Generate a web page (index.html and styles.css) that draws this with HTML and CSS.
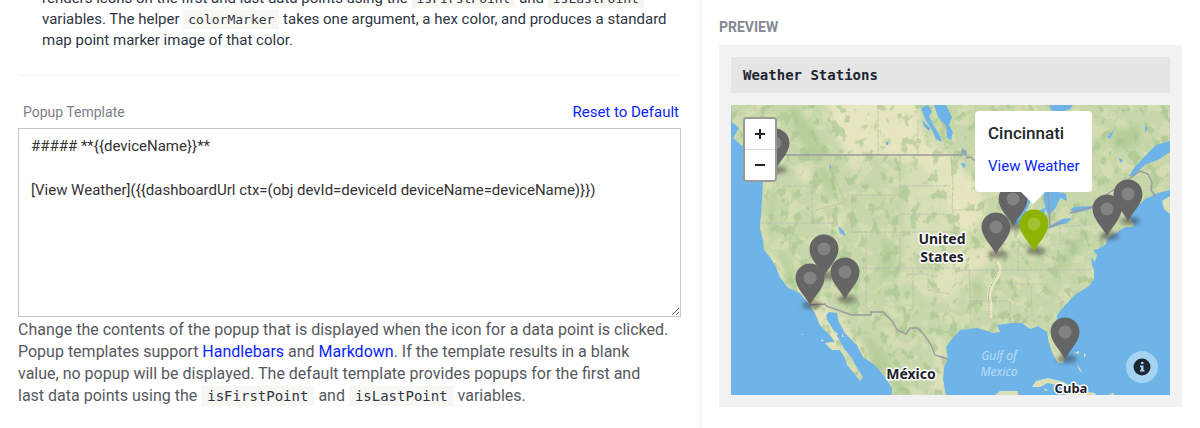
FILE: index.html
```html
<!DOCTYPE html>
<html lang="en">
<head>
<meta charset="utf-8">
<title>Map block editor</title>
<link rel="stylesheet" href="styles.css">
</head>
<body>
<main class="editor">
  <section class="settings">
    <p class="note">renders icons on the first and last data points using the <code>isFirstPoint</code> and <code>isLastPoint</code><br>variables. The helper <code>colorMarker</code> takes one argument, a hex color, and produces a standard<br>map point marker image of that color.</p>
    <hr class="divider">
    <div class="field-head">
      <label class="field-label" for="popup-template">Popup Template</label>
      <a class="reset" href="#">Reset to Default</a>
    </div>
    <textarea class="template" id="popup-template" spellcheck="false">##### **{{deviceName}}**

[View Weather]({{dashboardUrl ctx=(obj devId=deviceId deviceName=deviceName)}})</textarea>
    <p class="help">Change the contents of the popup that is displayed when the icon for a data point is clicked.<br>Popup templates support <a href="#">Handlebars</a> and <a href="#">Markdown</a>. If the template results in a blank<br>value, no popup will be displayed. The default template provides popups for the first and<br>last data points using the <code>isFirstPoint</code> and <code>isLastPoint</code> variables.</p>
  </section>
  <aside class="preview">
    <h2 class="preview-title">PREVIEW</h2>
    <div class="panel">
      <h3 class="block-title">Weather Stations</h3>
      <div class="map">
        <svg class="map-art" viewBox="731 105 439 290" role="img" aria-label="Map of weather stations">
          <defs>
            <filter id="soft" x="-30%" y="-30%" width="160%" height="160%"><feGaussianBlur stdDeviation="3"/></filter>
            <filter id="haze" x="-60%" y="-100%" width="220%" height="300%"><feGaussianBlur stdDeviation="2"/></filter>
            <filter id="forest" x="0" y="0" width="100%" height="100%" color-interpolation-filters="sRGB">
              <feTurbulence type="fractalNoise" baseFrequency=".1 .08" numOctaves="3" seed="8"/>
              <feColorMatrix values="0 0 0 0 .65  0 0 0 0 .77  0 0 0 0 .55  9 0 0 0 -5.1"/>
            </filter>
            <filter id="plain" x="0" y="0" width="100%" height="100%" color-interpolation-filters="sRGB">
              <feTurbulence type="fractalNoise" baseFrequency=".07 .08" numOctaves="4" seed="21"/>
              <feColorMatrix values="0 0 0 0 .86  0 0 0 0 .88  0 0 0 0 .71  9 0 0 0 -4.7"/>
            </filter>
            <path id="land" d="M731 105H1170V190L1158 193 1147 198 1139 204 1132 210 1128 217 1133 222 1134 227 1126 227 1122 229 1113 235 1107 238 1106 244 1098 249 1093 250 1097 255 1095 262 1091 257 1092 265 1094 270 1094 278 1090 285 1083 290 1077 293 1065 305 1057 315 1056 322 1063 340 1067 353 1063 363 1058 363 1052 352 1049 343 1047 332 1038 326 1030 329 1022 323 1010 323 997 325 1000 332 993 333 985 330 977 328 960 330 952 339 946 347 948 358 944 367 943 380 946 395H892V388L885 377 875 365 863 357 857 345 845 333 839 322 837 313 829 312 826 315 827 320 832 328 838 338 845 350 852 358 855 365 863 377 860 381 853 372 847 365 845 358 840 350 832 350 825 343 835 342 830 335 820 325 815 313 808 303 800 293 788 288 780 277 775 265 770 257 764 250 763 240 760 228 761 215 762 200 763 182 754 165 751 140 742 146 733 138 739 128 732 122Z"/>
            <clipPath id="land-clip"><use href="#land"/></clipPath>
            <g id="pin">
              <ellipse cx="2" cy="0" rx="10" ry="4" fill="#333" opacity=".5" filter="url(#haze)"/>
              <path d="M0 0C-4-8-14.500-17-14.500-27A14.500 14.500 0 0 1 14.500-27C14.500-17 4-8 0 0Z"/>
              <circle cy="-27" r="6.5" fill="#fff" opacity=".2"/>
            </g>
          </defs>
          <rect x="731" y="105" width="439" height="290" fill="#6eb4e8"/>
          <use href="#land" fill="#c7d7aa"/>
          <g clip-path="url(#land-clip)">
            <rect x="731" y="105" width="439" height="290" filter="url(#plain)" opacity=".65"/>
            <g filter="url(#soft)">
              <path opacity=".85" fill="#ebe7c2" d="M826 100H915L925 140 950 154 975 182 985 205 975 235 955 230 948 205 935 190 925 165 900 158 870 154 850 158 838 140Z"/>
              <path opacity=".8" fill="#e8e5bf" d="M764 180L772 182 766 240 785 275 770 265ZM800 165L814 170 808 184 798 180ZM810 208L830 222 850 208 840 228 822 222ZM845 160L868 158 855 174ZM796 285L808 290 840 318 840 350 860 380 810 330ZM835 315L850 330 890 375 895 395 845 345ZM932 285L955 250 1010 245 1005 255 960 280 948 300ZM936 350L944 335V395H936Z"/>
              <path opacity=".6" fill="#e0e2ba" d="M905 165H950V255H905ZM895 272H960V300H930ZM990 225H1045V245H990ZM960 325L1040 325 1060 355 1045 345 1000 328ZM1080 285L1092 255 1094 280Z"/>
              <path opacity=".8" fill="#b0ca94" d="M787 105L800 110 828 152 815 165 800 140ZM815 165L830 172 838 200 830 195ZM768 190L775 190 772 230 767 240ZM776 250L785 255 796 282 790 282ZM882 240L892 243V280H882ZM860 328L885 355 910 395H900L870 365ZM1050 275L1075 240 1095 228 1075 255 1060 275ZM1110 130L1140 125 1140 145 1115 150ZM970 280L982 285 978 305Z"/>
            </g>
            <rect x="731" y="105" width="439" height="290" filter="url(#forest)" opacity=".6"/>
            <path d="M997 262Q1003 269 995 280T990 302V318" fill="none" stroke="#eae6c2" stroke-width="4"/>
            <path d="M995 262Q1001 269 994 280T989 302V318" fill="none" stroke="#9fa79c" stroke-width="1" stroke-dasharray="2 1"/>
          </g>
          <g fill="#6eb4e8">
            <path d="M934 105H946L952 117 949 125 953 132 951 140 947 138 946 126 938 117ZM921 108L928 105 932 112 929 116 934 126 940 136 942 142 936 139 931 128 926 121ZM922 120L930 128 929 131 924 126Z"/>
            <path d="M838 226L844 231 846 236 840 233ZM829 165L832 167 830 170ZM886 142H888V145H886ZM962 148L967 152 965 156 962 153ZM960 163L966 164 964 168ZM1050 105H1073L1070 109 1060 113 1051 110ZM1107 137L1115 129 1110 139ZM1145 125L1148 128 1145 133ZM1118 158L1123 160 1121 163Z"/>
            <path d="M1170 141L1156 145 1143 158 1134 168 1129 176 1132 177 1146 164 1158 160 1170 152Z"/>
            <path d="M1043 189L1066 194 1067 201 1060 198 1056 207 1050 215 1047 213 1044 202ZM1020 211L1024 190 1033 195 1022 221 1012 226ZM1037 212L1046 207 1044 215 1039 215Z"/>
            <path d="M1048 227L1062 219 1072 218 1067 223 1056 226 1048 229ZM1070 210L1074 207 1092 206 1100 200 1096 207 1088 210 1076 213Z"/>
          </g>
          <g fill="none" stroke="#b9bdb0" stroke-width=".8" stroke-dasharray="5 1">
            <path d="M878 105V154M918 120V154M781 186H812V223M761 223H832M790 223V252L829 290M812 223L816 210 845 202 840 190 831 170 830 156M852 194V232H866V268M852 195H900V156M900 186H950M900 214H945L955 220M900 232V270M852 232H960M832 223V268L829 288M832 268H960M866 268V308M907 274H928V290L950 294M913 268V310H907M951 156L953 186 952 210 960 225M952 210H980M961 270H1090M968 301H1010L1010 320M1008 284H1046L1066 305M1031 286L1032 315M1018 248V270M1035 250L1060 262M1060 225V244L1078 240M1064 227L1090 224M1104 213L1107 230M1122 195L1120 220M1002 105V154M969 270L971 325"/>
          </g>
          <g fill="none" stroke="#9a9aa1" stroke-width="1.4">
            <path d="M772 155H962V151H965L967 158 971 157 974 160 980 161M1048 190L1050 227 1063 222M1070 213L1092 207 1103 197 1128 180 1140 171 1148 174 1152 182 1151 190 1156 197M809 305L825 304 826 306 852 315H871V312H883L893 322 897 330 906 334 910 328H918L925 336 931 345 935 355 948 359"/>
          </g>
          <g fill="#dce0b7">
            <path d="M1032 387L1036 381 1048 378 1064 382 1074 390 1095 393 1096 395H1066L1060 386 1048 383 1040 387ZM995 395L1000 391H1018V395ZM1162 201L1170 196V214L1164 209ZM1074 353L1079 351 1079 354ZM1084 353L1086 355 1084 358ZM1077 364L1083 373 1079 370ZM1108 394L1114 393V395ZM1044 388L1048 390 1045 391ZM822 339L824 341 821 341ZM801 334H803V335ZM834 330L838 334 836 336ZM842 333L844 337 842 337Z"/>
          </g>
          <g class="map-label">
            <text x="942" y="244">United</text>
            <text x="942" y="262">States</text>
            <text x="911" y="379">México</text>
            <text class="map-label-small" x="1071" y="393">Cuba</text>
          </g>
          <g class="sea-label">
            <text x="999" y="360">Gulf of</text>
            <text x="999" y="376">Mexico</text>
          </g>
          <g fill="#656565">
            <use href="#pin" x="775" y="170"/>
            <use href="#pin" x="1128" y="221"/>
            <use href="#pin" x="1107" y="236"/>
            <use href="#pin" x="1013" y="226"/>
            <use href="#pin" x="996" y="254"/>
            <use href="#pin" x="824" y="276"/>
            <use href="#pin" x="845" y="299"/>
            <use href="#pin" x="810" y="305"/>
            <use href="#pin" x="1065" y="359"/>
          </g>
          <use href="#pin" x="1034" y="251" fill="#8cb400"/>
        </svg>
        <div class="zoom">
          <button class="zoom-button" type="button" aria-label="Zoom in"><svg width="12" height="12" viewBox="0 0 12 12"><path d="M6 1V11M1 6H11"/></svg></button>
          <button class="zoom-button" type="button" aria-label="Zoom out"><svg width="12" height="12" viewBox="0 0 12 12"><path d="M1 6H11"/></svg></button>
        </div>
        <div class="popup">
          <h5 class="popup-title">Cincinnati</h5>
          <a class="popup-link" href="#">View Weather</a>
        </div>
        <button class="info" type="button" aria-label="Attribution"><svg width="18" height="18" viewBox="0 0 18 18"><circle cx="9" cy="9" r="8.5" fill="#1c2733"/><path d="M8 4H10.500V6H8ZM7 7.500H10.500V12H11.500V13.500H7V12H8V9H7Z" fill="#a5d3f2"/></svg></button>
      </div>
    </div>
  </aside>
</main>
</body>
</html>
```
FILE: styles.css
```css
* { box-sizing: border-box; }
body {
  margin: 0;
  overflow: hidden;
  background: #fff;
  color: #2e3642;
  font-family: Roboto, "Open Sans", sans-serif;
}
h2, h3, h5, p { margin: 0; }
a { color: #0a24fa; text-decoration: none; }
code {
  padding: 2px 5px;
  background: #f7f7f4;
  color: #2e3642;
  font-family: "DejaVu Sans Mono", monospace;
}
.editor {
  display: grid;
  grid-template-columns: 7fr 5fr;
  min-height: 100vh;
}
.settings { min-width: 0; padding: 0 19px 0 18px; }
.note {
  margin-top: -12px;
  padding-left: 24px;
  font-size: 15px;
  line-height: 21px;
  white-space: nowrap;
}
.note code { font-size: 13px; }
.divider {
  height: 1px;
  margin: 24px 0 26px;
  border: 0;
  background: #f1f1f1;
}
.field-head {
  display: flex;
  align-items: center;
  justify-content: space-between;
  padding: 0 2px 0 5px;
  line-height: 20px;
}
.field-label { color: #7b7f86; font-size: 14px; }
.reset { font-size: 15px; }
.template {
  display: block;
  width: 100%;
  height: 189px;
  margin-top: 6px;
  padding: 6px 12px;
  border: 1px solid #c4c4c4;
  border-radius: 0;
  outline: 0;
  background: #fff;
  color: #333;
  font: 15px/22px Roboto, "Open Sans", sans-serif;
  resize: both;
}
.help {
  margin-top: 2px;
  color: #56595e;
  font-size: 16px;
  line-height: 22px;
  white-space: nowrap;
}
.help code { padding: 2px 6px; font-size: 14px; }
.preview {
  min-width: 0;
  padding: 18px 18px 0;
  border-left: 1px solid #f4f0f0;
}
.preview-title {
  color: #858a93;
  font: bold 14px/18px Roboto, sans-serif;
}
.panel {
  display: grid;
  gap: 12px;
  margin-top: 9px;
  padding: 12px;
  background: #f2f2f2;
}
.block-title {
  padding: 8px 12px;
  background: #e5e5e5;
  color: #1c2431;
  font: bold 14px/20px "DejaVu Sans Mono", monospace;
}
.map { position: relative; }
.map-art { display: block; width: 100%; height: auto; }
.map-label {
  fill: #1e2229;
  stroke: #fff;
  stroke-width: 3px;
  stroke-linejoin: round;
  paint-order: stroke;
  font: bold 14px "Noto Sans", sans-serif;
  text-anchor: middle;
}
.map-label-small { font-size: 13px; }
.sea-label {
  fill: #b9dcf6;
  font: italic 12px "Noto Sans", sans-serif;
  text-anchor: middle;
}
.zoom {
  position: absolute;
  top: 12px;
  left: 12px;
  display: grid;
  width: 34px;
  overflow: hidden;
  border: 2px solid #999b96;
  border-radius: 4px;
  background: #fff;
}
.zoom-button {
  display: grid;
  place-items: center;
  height: 30px;
  padding: 0;
  border: 0;
  background: #fff;
}
.zoom-button + .zoom-button { height: 31px; border-top: 1px solid #ddd; }
.zoom-button path { fill: none; stroke: #222; stroke-width: 2; }
.popup {
  position: absolute;
  top: 6px;
  right: 78px;
  width: 117px;
  padding: 12px 13px 15px;
  border-radius: 4px;
  background: #fff;
  white-space: nowrap;
}
.popup::after {
  content: "";
  position: absolute;
  top: 100%;
  left: 46px;
  border: 12px solid transparent;
  border-top-color: #fff;
  border-bottom: 0;
}
.popup-title {
  margin-bottom: 12px;
  color: #24272c;
  font-size: 17px;
  font-weight: 500;
  line-height: 20px;
}
.popup-link { display: block; font-size: 15px; line-height: 22px; }
.info {
  position: absolute;
  right: 12px;
  bottom: 12px;
  display: grid;
  place-items: center;
  width: 32px;
  height: 32px;
  padding: 0;
  border: 0;
  border-radius: 50%;
  background: #a5d3f2;
}
```
